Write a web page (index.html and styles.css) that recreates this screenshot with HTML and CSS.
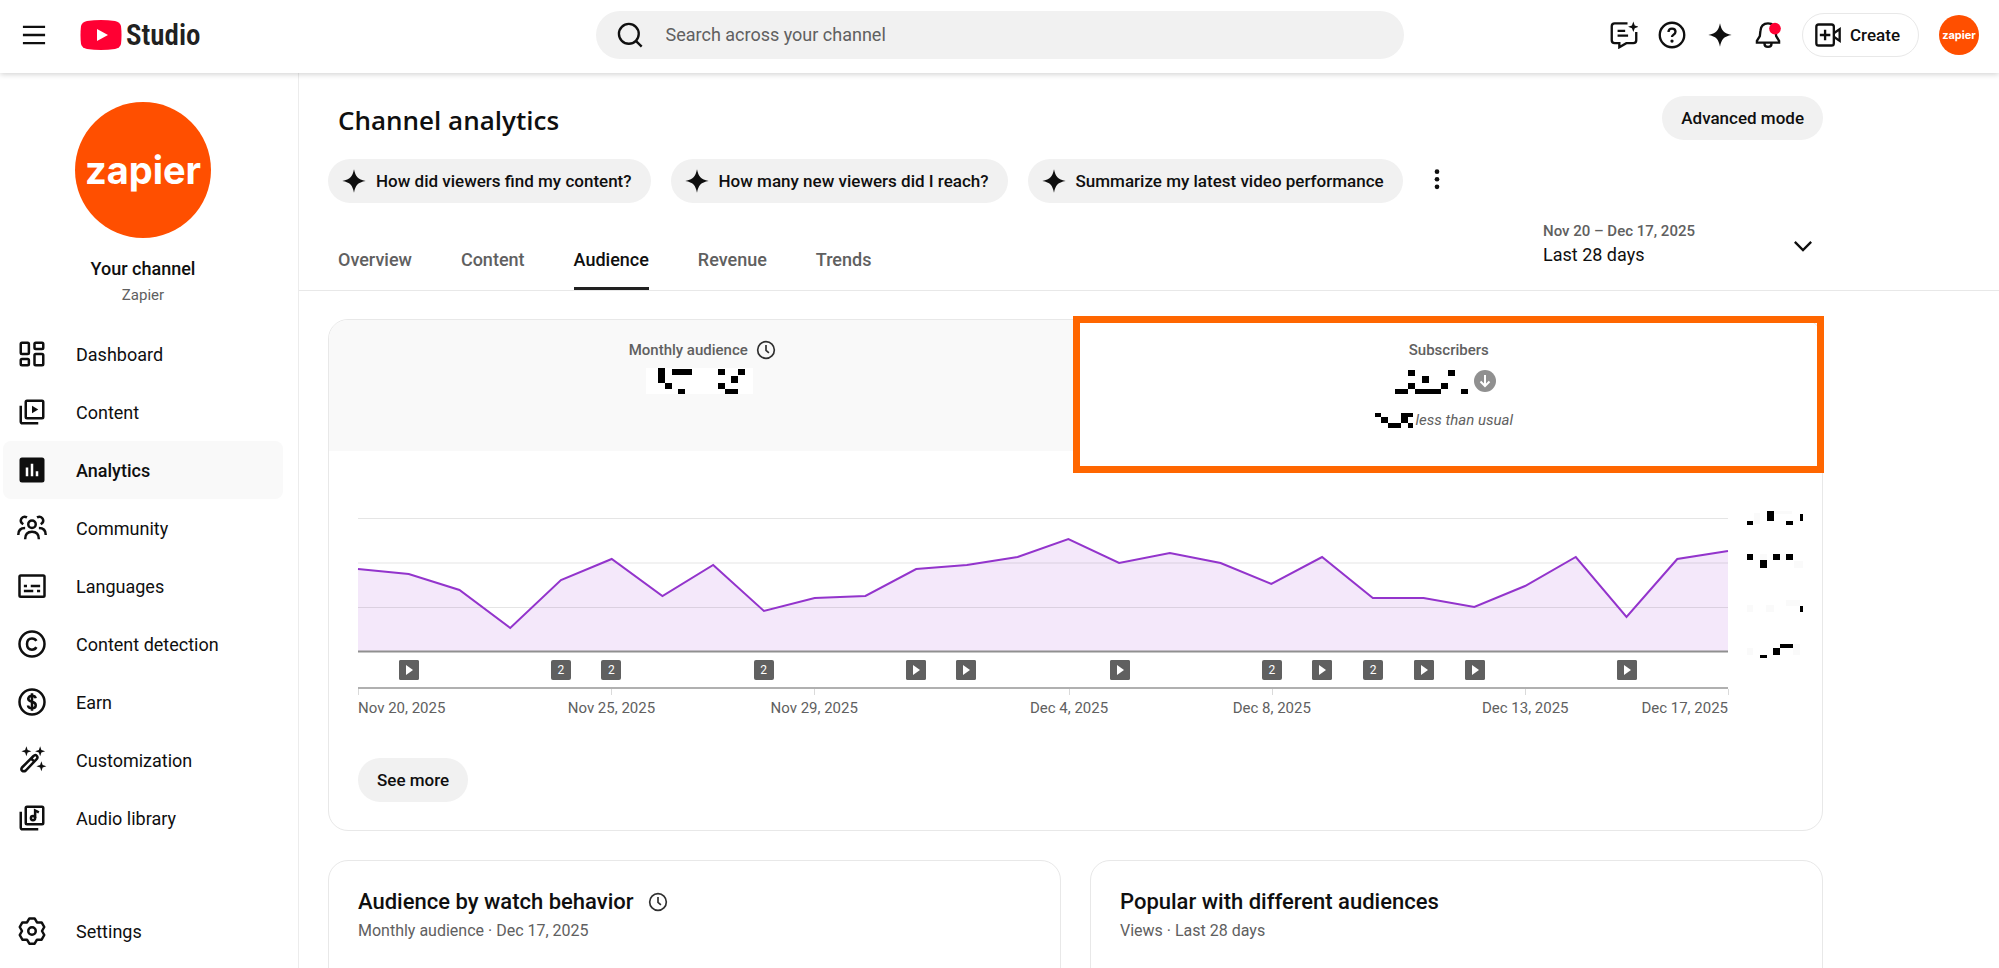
FILE: index.html
```html
<!DOCTYPE html>
<html lang="en">
<head>
    <meta charset="UTF-8">
    <meta name="viewport" content="width=device-width, initial-scale=1.0">
    <title>Channel analytics - YouTube Studio</title>
    <link rel="stylesheet" href="styles.css">
</head>
<body>

<!-- Shared icons -->
<svg class="sprite" aria-hidden="true">
    <symbol id="spark" viewBox="0 0 24 24"><path fill="currentColor" d="M12 2c1.300 6.300 3.200 8.800 10 10-6.800 1.200-8.700 3.700-10 10-1.300-6.300-3.200-8.800-10-10 6.800-1.200 8.700-3.700 10-10z"/></symbol>
    <symbol id="clock" viewBox="0 0 24 24"><circle cx="12" cy="12" r="10"/><path d="M12 6v6.500l3.500 3"/></symbol>
    <symbol id="play" viewBox="0 0 20 20"><rect width="20" height="20" rx="2" fill="#606060"/><path fill="#fff" d="M7 5l7 5-7 5z"/></symbol>
</svg>

<header class="topbar">
    <div class="topbar-left">
        <button class="icon-btn" type="button" aria-label="Collapse menu">
            <svg class="icon" viewBox="0 0 24 24"><path d="M2.500 5h19M2.500 12h19M2.500 19h19"/></svg>
        </button>
        <a class="logo" href="#" aria-label="Studio home">
            <svg class="logo-mark" viewBox="0 0 42 30"><path fill="#f03" d="M7 1Q21-1 35 1q5 1 6 5 1 9 0 18-1 4-6 5-14 2-28 0-5-1-6-5-1-9 0-18 1-4 6-5z"/><path fill="#fff" d="M17 9l11 6-11 6z"/></svg>
            <span>Studio</span>
        </a>
    </div>

    <label class="search">
        <svg class="icon" viewBox="0 0 24 24"><circle cx="11" cy="11" r="8.500"/><path d="M17 17l5 5"/></svg>
        <input type="search" placeholder="Search across your channel" aria-label="Search across your channel">
    </label>

    <div class="topbar-right">
        <button class="icon-btn" type="button" aria-label="Feedback">
            <svg class="icon" viewBox="0 0 24 24"><path d="M15 2H4Q1.500 2 1.500 4.500v12Q1.500 19 4 19h4v3.500l6-3.500h6q2.500 0 2.500-2.500V9.500M6.500 8.500H13M6.500 12.500h9"/><path class="solid" d="M20 .500l1.200 3.300 3.300 1.200-3.300 1.200L20 9.500l-1.200-3.300L15.500 5l3.300-1.200z"/></svg>
        </button>
        <button class="icon-btn" type="button" aria-label="Help">
            <svg class="icon" viewBox="0 0 24 24"><circle cx="12" cy="12" r="10.500"/><path d="M9 9.500q0-3 3-3t3 2.700q0 1.500-1.700 2.500-1.300.8-1.300 2"/><circle class="solid" cx="12" cy="17.200" r="1.400"/></svg>
        </button>
        <button class="icon-btn" type="button" aria-label="Ask Studio">
            <svg class="icon spark"><use href="#spark"/></svg>
        </button>
        <button class="icon-btn" type="button" aria-label="Notifications">
            <svg class="icon" viewBox="0 0 24 24"><path d="M12 2q-6 0-6.500 6.500L5 13l-2.500 4v1.500h19V17L19 13l-.5-4.500Q18 2 12 2zM9 19.500q0 2.700 3 2.700t3-2.700"/><circle class="dot" cx="18" cy="6.500" r="5"/></svg>
        </button>
        <button class="create" type="button">
            <svg class="icon" viewBox="0 0 24 24"><rect x="2" y="3" width="15" height="18" rx="2"/><path d="M9.500 7.500v9M5 12h9M17 10.500l5-3.500v10l-5-3.500"/></svg>
            Create
        </button>
        <button class="avatar avatar-small" type="button" aria-label="Account">zapier</button>
    </div>
</header>

<div class="layout">
    <aside class="sidebar">
        <div class="channel">
            <a class="avatar avatar-large" href="#">zapier</a>
            <div class="channel-title">Your channel</div>
            <div class="channel-name">Zapier</div>
        </div>
        <nav class="nav">
            <a href="#"><svg class="icon" viewBox="0 0 24 24"><rect x="3" y="3" width="6.500" height="9" rx="1"/><rect x="14" y="3" width="7" height="5" rx="1"/><rect x="3" y="16" width="6.500" height="5" rx="1"/><rect x="14" y="12" width="7" height="9" rx="1"/></svg>Dashboard</a>
            <a href="#"><svg class="icon" viewBox="0 0 24 24"><rect x="7" y="3" width="14" height="14" rx="1"/><path d="M3 7v12.500q0 1.500 1.500 1.500H17"/><path class="solid" d="M12 7l5 3-5 3z"/></svg>Content</a>
            <a class="active" href="#"><svg class="icon" viewBox="0 0 24 24"><rect class="solid" x="2" y="2" width="20" height="20" rx="2"/><path class="bars" d="M8 10v7M12 7v10M16 13v4"/></svg>Analytics</a>
            <a href="#"><svg class="icon" viewBox="0 0 24 24"><circle cx="12" cy="9" r="3"/><path d="M6.500 21q0-6 5.500-6t5.500 6M8 3.500Q5 2 3.500 4.500T5 9M16 3.500q3-1.500 4.500 1T19 9M1 17.500q0-5.500 5.500-5.500M23 17.500q0-5.500-5.500-5.500"/></svg>Community</a>
            <a href="#"><svg class="icon" viewBox="0 0 24 24"><rect x="2" y="3.500" width="20" height="17" rx="1"/><path d="M5.500 12H8M11 12h7.500M5.500 16H13M16 16h2.500"/></svg>Languages</a>
            <a href="#"><svg class="icon" viewBox="0 0 24 24"><circle cx="12" cy="12" r="10"/><path d="M15.500 9.500Q14.500 7.500 12 7.500q-4 0-4 4.500t4 4.500q2.500 0 3.500-2"/></svg>Content detection</a>
            <a href="#"><svg class="icon" viewBox="0 0 24 24"><circle cx="12" cy="12" r="10"/><path d="M15 9q-.5-2-3-2T9 9.300q0 1.700 3 2.500t3 2.700q0 2.500-3 2.500t-3.200-2.200M12 5v14"/></svg>Earn</a>
            <a href="#"><svg class="icon" viewBox="0 0 24 24"><path d="M4 18L13 9q2-2 3 0 1 1-.5 2.500L7 20.500q-1.500 1-3 0-1-1 0-2.500zM11.500 11l2.500 2.500"/><path class="solid" d="M7.500 1l1 3 3 1-3 1-1 3-1-3-3-1 3-1zM18.500 1l1 3 3 1-3 1-1 3-1-3-3-1 3-1zM19.500 13l1 3 3 1-3 1-1 3-1-3-3-1 3-1z"/></svg>Customization</a>
            <a href="#"><svg class="icon" viewBox="0 0 24 24"><rect x="7" y="3" width="14" height="14" rx="1"/><path d="M3 7v12.500q0 1.500 1.500 1.500H17M14.500 12V6l3 1.500"/><circle cx="12.800" cy="12" r="1.700"/></svg>Audio library</a>
        </nav>
        <nav class="nav nav-bottom">
            <a href="#"><svg class="icon" viewBox="0 0 24 24" stroke-linejoin="round"><circle cx="12" cy="12" r="3"/><path d="M9.900 1.900h4.200L16 5.100h3.700l2.100 3.700L20 12l1.800 3.200-2.100 3.700H16l-1.900 3.200H9.900L8 18.900H4.300l-2.100-3.700L4 12 2.200 8.800l2.100-3.700H8z"/></svg>Settings</a>
        </nav>
    </aside>

    <main class="main">
        <div class="page-head">
            <div class="inner">
                <div class="title-row">
                    <h1>Channel analytics</h1>
                    <button class="pill" type="button">Advanced mode</button>
                </div>
                <div class="chips">
                    <button class="pill chip" type="button"><svg><use href="#spark"/></svg>How did viewers find my content?</button>
                    <button class="pill chip" type="button"><svg><use href="#spark"/></svg>How many new viewers did I reach?</button>
                    <button class="pill chip" type="button"><svg><use href="#spark"/></svg>Summarize my latest video performance</button>
                    <button class="icon-btn" type="button" aria-label="More">
                        <svg class="icon" viewBox="0 0 24 24"><circle class="solid" cx="12" cy="4" r="2"/><circle class="solid" cx="12" cy="10.500" r="2"/><circle class="solid" cx="12" cy="17" r="2"/></svg>
                    </button>
                </div>
                <div class="tab-row">
                    <nav class="tabs">
                        <a href="#">Overview</a>
                        <a href="#">Content</a>
                        <a class="active" href="#">Audience</a>
                        <a href="#">Revenue</a>
                        <a href="#">Trends</a>
                    </nav>
                    <button class="period" type="button" aria-haspopup="listbox">
                        <span><small>Nov 20 – Dec 17, 2025</small>Last 28 days</span>
                        <svg class="icon" viewBox="0 0 24 24"><path d="M5 11l7 7 7-7"/></svg>
                    </button>
                </div>
            </div>
        </div>

        <div class="content inner">
            <section class="card">
                <div class="metrics">
                    <button class="metric muted" type="button">
                        <span class="metric-label">Monthly audience <svg class="clock"><use href="#clock"/></svg></span>
                        <span class="metric-value">
                            <svg width="107" height="26" viewBox="0 0 107 26" shape-rendering="crispEdges"><path fill="#fff" d="M0 0h107v26H0z"/><path d="M12 0h7v15h-7zM19 15h7v6h-7zM26 1h20v6H26zM32 21h7v5h-7zM72 1h7v6h-7zM92 1h7v6h-7zM85 8h7v7h-7zM72 15h7v6h-7zM79 21h13v5H79z"/></svg>
                        </span>
                    </button>
                    <button class="metric selected" type="button">
                        <span class="metric-label">Subscribers</span>
                        <span class="metric-value">
                            <svg width="82" height="26" viewBox="0 0 82 26" shape-rendering="crispEdges"><path d="M9 21h13v5H9zM22 2h7v6h-7zM22 15h7v6h-7zM29 21h26v5H29zM36 8h7v7h-7zM55 15h7v6h-7zM62 2h7v6h-7zM75 21h7v5h-7z"/></svg>
                            <svg class="trend" viewBox="0 0 22 22"><circle cx="11" cy="11" r="11" fill="#909090"/><path d="M11 5v11M6.500 11.500L11 16l4.500-4.500"/></svg>
                        </span>
                        <span class="metric-note">
                            <svg width="38" height="15" viewBox="0 0 38 15" shape-rendering="crispEdges"><path d="M0 0h6v4H0zM6 4h7v6H6zM13 10h13v5H13zM26 0h12v4h-5v6h-7zM33 10h5v5h-5z"/></svg>
                            less than usual
                        </span>
                        <span class="highlight"></span>
                    </button>
                </div>

                <div class="chart">
                    <div class="plot">
                        <!-- x is the day index, 0 to 27 -->
                        <svg class="graph" viewBox="0 0 27 134" preserveAspectRatio="none">
                            <path class="area" d="M0 134V51L1 56 2 72 3 110 4 62 5 41 6 78 7 47 8 93 9 80 10 78 11 51 12 47 13 39 14 21 15 45 16 35 17 45 18 66 19 39 20 80 21 80 22 89 23 68 24 39 25 99 26 41 27 33V134z"/>
                            <path class="grid-line" d="M0 .5H27M0 45H27M0 89.500H27"/>
                            <path class="base-line" d="M0 133.500H27"/>
                            <polyline class="line" points="0,51 1,56 2,72 3,110 4,62 5,41 6,78 7,47 8,93 9,80 10,78 11,51 12,47 13,39 14,21 15,45 16,35 17,45 18,66 19,39 20,80 21,80 22,89 23,68 24,39 25,99 26,41 27,33"/>
                        </svg>
                        <div class="markers">
                            <span style="left: 3.7%"><svg><use href="#play"/></svg></span>
                            <span style="left: 14.8%">2</span>
                            <span style="left: 18.5%">2</span>
                            <span style="left: 29.6%">2</span>
                            <span style="left: 40.7%"><svg><use href="#play"/></svg></span>
                            <span style="left: 44.4%"><svg><use href="#play"/></svg></span>
                            <span style="left: 55.6%"><svg><use href="#play"/></svg></span>
                            <span style="left: 66.7%">2</span>
                            <span style="left: 70.4%"><svg><use href="#play"/></svg></span>
                            <span style="left: 74.1%">2</span>
                            <span style="left: 77.8%"><svg><use href="#play"/></svg></span>
                            <span style="left: 81.5%"><svg><use href="#play"/></svg></span>
                            <span style="left: 92.6%"><svg><use href="#play"/></svg></span>
                        </div>
                        <div class="dates">
                            <span class="first">Nov 20, 2025</span>
                            <span style="left: 18.5%">Nov 25, 2025</span>
                            <span style="left: 33.3%">Nov 29, 2025</span>
                            <span style="left: 51.9%">Dec 4, 2025</span>
                            <span style="left: 66.7%">Dec 8, 2025</span>
                            <span style="left: 85.2%">Dec 13, 2025</span>
                            <span class="last">Dec 17, 2025</span>
                        </div>
                    </div>
                    <div class="scale">
                        <svg viewBox="0 0 58 16" shape-rendering="crispEdges"><path fill="#fafafa" d="M8 3h6v11H8zM26 1h20v3H26z"/><path d="M1 11h6v4H1zM21 1h7v10h-7zM40 11h7v4h-7zM54 4h3v7h-3z"/></svg>
                        <svg viewBox="0 0 58 16" shape-rendering="crispEdges"><path fill="#fafafa" d="M14 0h7v6h-7zM48 7h9v7h-9z"/><path d="M1 0h6v6H1zM14 6h7v8h-7zM27 0h7v6h-7zM40 0h7v6h-7z"/></svg>
                        <svg viewBox="0 0 58 16" shape-rendering="crispEdges"><path fill="#fafafa" d="M1 7h6v7H1zM20 7h8v7h-8zM40 2h14v6H40z"/><path d="M54 8h3v6h-3z"/></svg>
                        <svg viewBox="0 0 58 16" shape-rendering="crispEdges"><path fill="#fafafa" d="M1 6h6v7H1zM47 2h7v11h-7z"/><path d="M14 13h7v3h-7zM27 6h7v7h-7zM34 2h13v4H34z"/></svg>
                    </div>
                </div>

                <button class="pill see-more" type="button">See more</button>
            </section>

            <div class="card-row">
                <section class="card small-card">
                    <h2>Audience by watch behavior <svg class="clock"><use href="#clock"/></svg></h2>
                    <p>Monthly audience · Dec 17, 2025</p>
                </section>
                <section class="card small-card">
                    <h2>Popular with different audiences</h2>
                    <p>Views · Last 28 days</p>
                </section>
            </div>
        </div>
    </main>
</div>

</body>
</html>
```

FILE: styles.css
```css
* {
    box-sizing: border-box;
}

body {
    margin: 0;
    height: 100vh;
    display: flex;
    flex-direction: column;
    overflow: hidden;
    font-family: Roboto, sans-serif;
    font-size: 18px;
    color: #0f0f0f;
    background: #fff;
}

a {
    color: inherit;
    text-decoration: none;
}

button {
    font: inherit;
    color: inherit;
    border: none;
    background: none;
    padding: 0;
    cursor: pointer;
}

/* Icons */
.sprite {
    display: none;
}

.icon {
    width: 28px;
    height: 28px;
    flex: none;
    fill: none;
    stroke: currentColor;
    stroke-width: 2;
}

.icon .solid {
    fill: currentColor;
    stroke: none;
}

.icon .bars {
    stroke: #fff;
}

.icon .dot {
    fill: #f03;
    stroke: none;
}

.icon.spark {
    stroke: none;
}

.icon-btn {
    display: flex;
}

.clock {
    width: 20px;
    height: 20px;
    fill: none;
    stroke: #303030;
    stroke-width: 2;
}

/* Top bar */
.topbar {
    display: grid;
    grid-template-columns: 1fr minmax(0, 808px) 1fr;
    align-items: center;
    height: 73px;
    padding: 0 20px 4px;
    flex: none;
    position: relative;
    z-index: 1;
    box-shadow: 0 1px 6px rgba(0, 0, 0, 0.2);
    background: #fff;
}

.topbar-left,
.topbar-right,
.logo {
    display: flex;
    align-items: center;
}

.topbar-left {
    gap: 32px;
}

.logo {
    gap: 4px;
    font-family: "Roboto Condensed", "Liberation Sans Narrow", Roboto, sans-serif;
    font-size: 29px;
    font-weight: 600;
    line-height: 32px;
    color: #212121;
}

.logo-mark {
    width: 42px;
    height: 30px;
}

.search {
    display: flex;
    align-items: center;
    gap: 20px;
    height: 48px;
    padding: 0 20px;
    border-radius: 24px;
    background: #f1f1f1;
}

.search input {
    flex: 1;
    border: none;
    outline: none;
    background: none;
    font: inherit;
}

.search input::placeholder {
    color: #606060;
}

.topbar-right {
    justify-content: flex-end;
    gap: 20px;
}

.create {
    display: flex;
    align-items: center;
    gap: 8px;
    height: 44px;
    padding: 0 18px 0 11px;
    border: 1px solid #e8e8e8;
    border-radius: 22px;
    font-size: 17px;
    font-weight: 500;
}

/* Avatars */
.avatar {
    display: flex;
    align-items: center;
    justify-content: center;
    border-radius: 50%;
    background: #ff4f00;
    color: #fff;
    font-family: Inter, sans-serif;
    font-weight: 700;
}

.avatar-small {
    width: 40px;
    height: 40px;
    font-size: 11px;
}

.avatar-large {
    width: 136px;
    height: 136px;
    font-size: 38px;
}

/* Sidebar */
.layout {
    display: flex;
    flex: 1;
    min-height: 0;
}

.sidebar {
    display: flex;
    flex-direction: column;
    width: 299px;
    flex: none;
    padding: 29px 15px 8px 3px;
    border-right: 1px solid #ececec;
}

.channel {
    display: flex;
    flex-direction: column;
    align-items: center;
    margin-bottom: 17px;
}

.channel-title {
    margin-top: 18px;
    font-weight: 500;
    line-height: 26px;
}

.channel-name {
    font-size: 15px;
    line-height: 26px;
    color: #606060;
}

.nav a {
    display: flex;
    align-items: center;
    gap: 29px;
    height: 58px;
    padding-left: 14px;
    border-radius: 8px;
}

.nav .icon {
    width: 30px;
    height: 30px;
}

.nav .active {
    background: #f9f9f9;
    font-weight: 500;
}

.nav-bottom {
    margin-top: auto;
}

/* Page head */
.main {
    flex: 1;
    min-width: 0;
    overflow: hidden;
}

.page-head,
.content {
    padding-left: 29px;
}

.page-head {
    padding-top: 23px;
    border-bottom: 1px solid #e8e8e8;
}

.inner {
    max-width: 1495px;
}

.title-row {
    display: flex;
    align-items: center;
    justify-content: space-between;
    height: 44px;
    padding-left: 10px;
}

h1 {
    margin: 0;
    padding-top: 4px;
    font-family: "Open Sans", sans-serif;
    font-size: 26px;
    font-weight: 600;
}

.pill {
    height: 44px;
    padding: 0 19px;
    border-radius: 22px;
    background: #f1f1f1;
    font-size: 17px;
    font-weight: 500;
}

.chips {
    display: flex;
    align-items: center;
    gap: 20px;
    margin-top: 19px;
}

.chip {
    display: flex;
    align-items: center;
    gap: 8px;
    padding-left: 12px;
}

.chip svg {
    width: 28px;
    height: 28px;
}

.tab-row {
    display: flex;
    justify-content: space-between;
    align-items: flex-end;
    height: 87px;
}

.tabs {
    display: flex;
    gap: 49px;
    padding-left: 10px;
    font-weight: 500;
    color: #606060;
}

.tabs a {
    height: 62px;
    line-height: 64px;
}

.tabs .active {
    color: #0f0f0f;
    border-bottom: 3px solid #212121;
}

.period {
    display: flex;
    align-items: center;
    justify-content: space-between;
    width: 280px;
    padding: 0 6px 23px 0;
    text-align: left;
    line-height: 24px;
}

.period small {
    display: block;
    font-size: 15px;
    font-weight: 500;
    color: #606060;
}

/* Cards */
.content {
    max-width: 1524px;
    padding-top: 28px;
}

.card {
    border: 1px solid #e8e8e8;
    border-radius: 20px;
}

.metrics {
    display: grid;
    grid-template-columns: 1fr 1fr;
}

.metric {
    display: flex;
    flex-direction: column;
    align-items: center;
    height: 131px;
    padding-top: 19px;
    position: relative;
}

.metric.muted {
    background: #f9f9f9;
    border-top-left-radius: 19px;
}

.metric-label,
.metric-value,
.metric-note {
    display: flex;
    align-items: center;
}

.metric-label {
    gap: 8px;
    height: 22px;
    font-size: 15px;
    font-weight: 500;
    color: #606060;
}

.metric-value {
    gap: 6px;
    margin-top: 7px;
    padding-right: 6px;
}

.selected .metric-value {
    padding-right: 16px;
}

.metric-note {
    gap: 3px;
    height: 24px;
    margin-top: 14px;
    padding-right: 10px;
    font-size: 15px;
    font-style: italic;
    color: #606060;
}

.trend {
    width: 22px;
    height: 22px;
    fill: none;
    stroke: #fff;
    stroke-width: 2;
}

.trend circle {
    stroke: none;
}

.highlight {
    position: absolute;
    inset: -4px -2px -22px -3px;
    border: 7px solid #ff6600;
}

/* Chart */
.chart {
    display: flex;
    gap: 18px;
    padding: 67px 18px 0 29px;
}

.plot {
    flex: 1;
    min-width: 0;
}

.graph {
    display: block;
    width: 100%;
    height: 134px;
    overflow: visible;
}

.graph path,
.graph polyline {
    fill: none;
    vector-effect: non-scaling-stroke;
}

.graph .area {
    fill: #f4e8fa;
}

.graph .grid-line {
    stroke: rgba(0, 0, 0, 0.1);
}

.graph .base-line {
    stroke: #909090;
    stroke-width: 2;
}

.graph .line {
    stroke: #9334cc;
    stroke-width: 2;
}

.markers {
    position: relative;
    height: 37px;
    border-bottom: 2px solid #b0b0b0;
}

.markers span {
    position: absolute;
    top: 8px;
    width: 20px;
    height: 20px;
    margin-left: -10px;
    border-radius: 2px;
    background: #606060;
    color: #fff;
    font-size: 12px;
    line-height: 20px;
    text-align: center;
}

.markers svg {
    display: block;
    width: 20px;
    height: 20px;
}

.dates {
    position: relative;
    height: 40px;
    font-size: 15px;
    line-height: 24px;
    color: #606060;
}

.dates span {
    position: absolute;
    width: 100px;
    margin-left: -50px;
    padding-top: 7px;
    text-align: center;
}

/* Tick above each date */
.dates span::before {
    content: "";
    position: absolute;
    top: 0;
    left: 50%;
    height: 6px;
    border-left: 1px solid #dadada;
}

.dates .first {
    left: 0;
    margin-left: 0;
    text-align: left;
}

.dates .first::before {
    left: 0;
}

.dates .last {
    right: 0;
    text-align: right;
}

.dates .last::before {
    left: 100%;
}

.scale {
    display: flex;
    flex-direction: column;
    justify-content: space-between;
    height: 148px;
    margin-top: -8px;
}

.scale svg {
    width: 58px;
    height: 16px;
}

.see-more {
    margin: 29px 29px 28px;
}

.card-row {
    display: grid;
    grid-template-columns: 1fr 1fr;
    gap: 29px;
    margin-top: 29px;
}

.small-card {
    height: 400px;
    padding: 27px 29px;
}

.small-card h2 {
    display: flex;
    align-items: center;
    gap: 14px;
    margin: 0;
    font-size: 22px;
    font-weight: 500;
    line-height: 28px;
}

.small-card p {
    margin: 3px 0;
    font-size: 16px;
    line-height: 24px;
    color: #606060;
}
```
